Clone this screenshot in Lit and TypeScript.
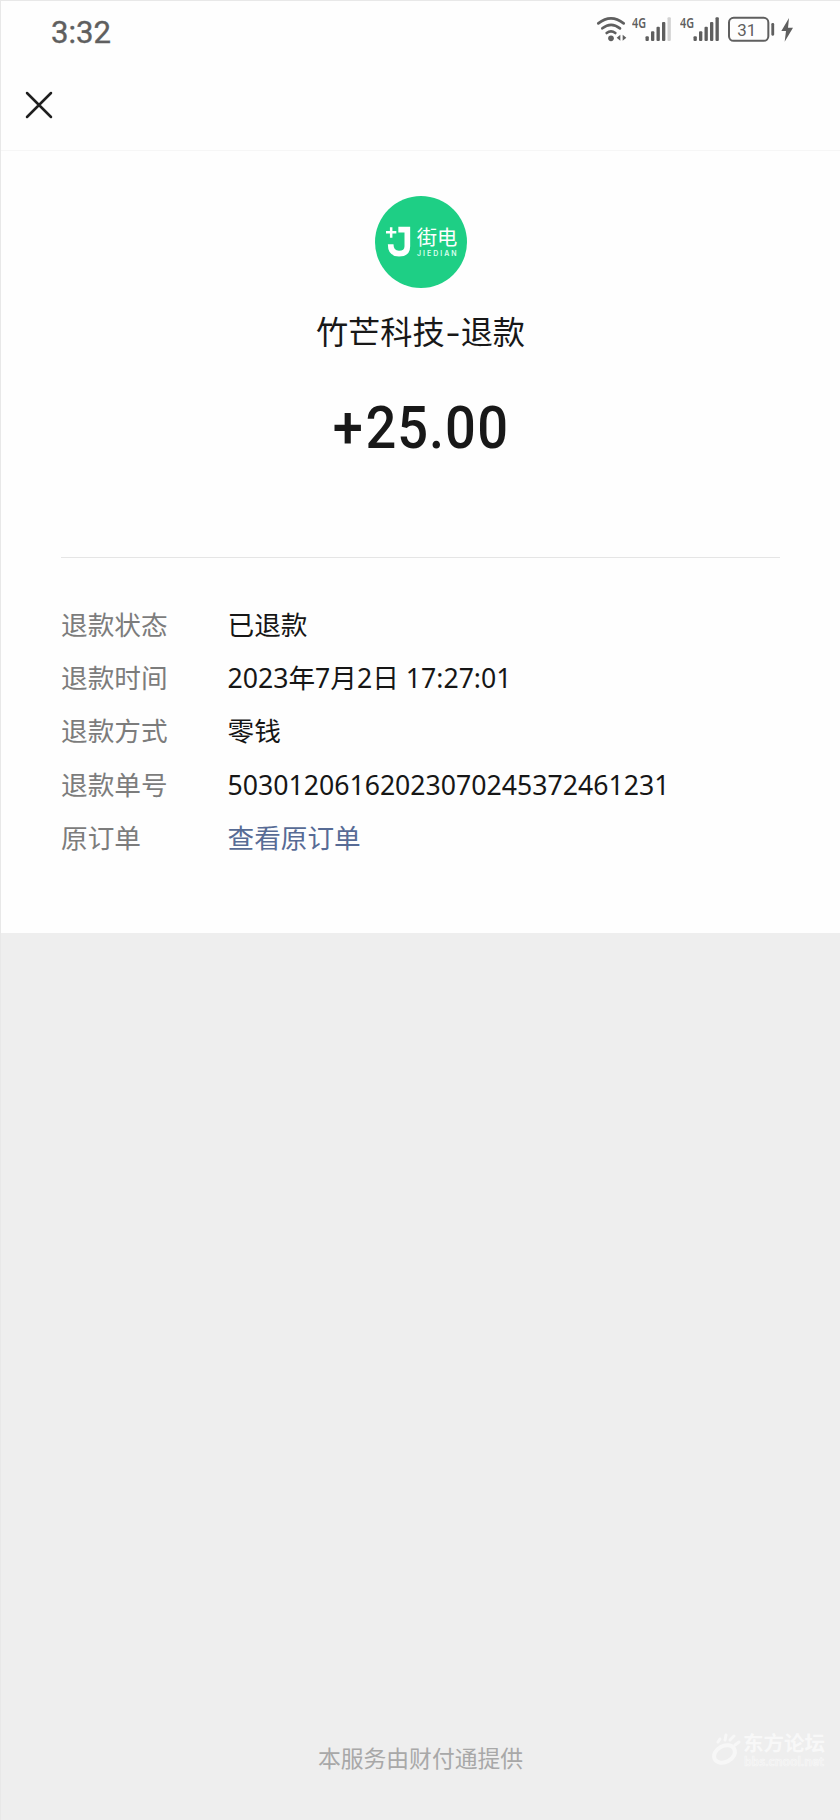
import { LitElement, html, svg, css } from "lit";
import { customElement, property } from "lit/decorators.js";

@customElement("status-bar")
class StatusBar extends LitElement {
  static styles = css`
    :host { display: flex; height: 61px; box-sizing: border-box; padding: 14px 0 0 50px; font-family: "Noto Sans", sans-serif; }
    svg { display: block; }
    .time { width: 64px; height: 40px; margin-top: -2px; flex: none; }
    .time text { font: 400 32px Roboto, sans-serif; fill: #5f5f5f; stroke: #5f5f5f; stroke-width: 0.4; }
    .icons { display: flex; margin-left: 481px; height: 28px; }
    .wifi { width: 32px; height: 28px; margin-right: 4px; }
    .signal { width: 41px; height: 28px; margin-right: 7px; }
    .battery { width: 48px; height: 28px; margin-right: 5px; }
    .bolt { width: 13px; height: 28px; }
    .net { font: 600 42px "Noto Sans", sans-serif; fill: #5f5f5f; }
    .level { font: 400 51px Roboto, sans-serif; fill: #5f5f5f; }
  `;

  signal(full: boolean) {
    return html`<svg class="signal" viewBox="0 0 123 84">
      <text class="net" x="0" y="38" textLength="42" lengthAdjust="spacingAndGlyphs">4G</text>
      ${[0, 1, 2, 3, 4].map((i) => {
        const top = [64, 49, 35, 21, 7][i];
        return svg`<rect x=${40.5 + i * 16.5} y=${top} width="10" height=${78 - top} rx="3" fill=${i === 4 && !full ? "#d2d2d2" : "#5f5f5f"}></rect>`;
      })}
    </svg>`;
  }

  render() {
    return html`
      <svg class="time" viewBox="0 0 64 40"><text x="0" y="29.500" textLength="60" lengthAdjust="spacingAndGlyphs">3:32</text></svg>
      <div class="icons">
        <svg class="wifi" viewBox="0 0 96 84">
          <g fill="none" stroke="#5f5f5f" stroke-width="8" stroke-linecap="round">
            <path d="M7 25Q45-5 83 25"></path>
            <path d="M19 40Q45 19 72 40"></path>
            <path d="M32 54Q45 44 58 54"></path>
          </g>
          <circle cx="45" cy="70" r="8.500" fill="#5f5f5f"></circle>
          <path d="M73 59V77L62 68ZM80 59V77L91 68Z" fill="#5f5f5f"></path>
        </svg>
        ${this.signal(false)}${this.signal(true)}
        <svg class="battery" viewBox="0 0 144 84">
          <rect x="3" y="8.500" width="118" height="69" rx="14" fill="none" stroke="#5f5f5f" stroke-width="6"></rect>
          <text class="level" x="28" y="62" textLength="57" lengthAdjust="spacingAndGlyphs">31</text>
          <rect x="130" y="24" width="8.500" height="38" rx="3.500" fill="#5f5f5f"></rect>
        </svg>
        <svg class="bolt" viewBox="0 0 39 84"><path d="M24 9L1 48H15L11 80L36 38H21Z" fill="#5f5f5f"></path></svg>
      </div>`;
  }
}

@customElement("brand-logo")
class BrandLogo extends LitElement {
  static styles = css`
    :host { display: block; width: 94px; height: 94px; }
    svg { display: block; width: 94px; height: 94px; }
    .cn { font: 400 60px "Noto Sans CJK SC", sans-serif; fill: #fff; }
    .en { font: 600 21px Inter, sans-serif; fill: #d9ffef; }
  `;
  render() {
    return html`<svg viewBox="40 30 282 282">
      <circle cx="181" cy="171" r="138" fill="#1ecf85"></circle>
      <path d="M76 142H107M91.500 127V158" stroke="#fff" stroke-width="7.500" fill="none"></path>
      <path d="M113 134H140V184Q140 206 115 206Q90 206 90 178" stroke="#fff" stroke-width="17" fill="none"></path>
      <text class="cn" x="168" y="181" textLength="122" lengthAdjust="spacingAndGlyphs">街电</text>
      <text class="en" x="169" y="214" textLength="119">JIEDIAN</text>
    </svg>`;
  }
}

@customElement("forum-mark")
class ForumMark extends LitElement {
  static styles = css`
    :host { display: block; width: 120px; height: 48px; }
    svg { display: block; width: 120px; height: 48px; }
    .name { font: 700 20px "Noto Sans CJK SC", sans-serif; fill: #f8f8f8; }
    .site { font: 600 12px "Noto Sans", sans-serif; fill: none; stroke: #f7f7f7; stroke-width: 0.7; }
  `;
  render() {
    return html`<svg viewBox="0 0 120 48">
      <ellipse cx="17.500" cy="27" rx="11" ry="8" transform="rotate(-28 17.500 27)" fill="none" stroke="#f7f7f7" stroke-width="4"></ellipse>
      <path d="M11 15L13 12M18 13L19 8M23 13L27 9M28 18L32 15" stroke="#f7f7f7" stroke-width="3" stroke-linecap="round"></path>
      <text class="name" x="36" y="24" textLength="82" lengthAdjust="spacingAndGlyphs">东方论坛</text>
      <text class="site" x="37" y="38.500" textLength="80" lengthAdjust="spacingAndGlyphs">bbs.cnool.net</text>
    </svg>`;
  }
}

@customElement("detail-row")
class DetailRow extends LitElement {
  static styles = css`
    :host { display: flex; height: 53.300px; align-items: center; font: 400 26.650px/38px "Noto Sans", "Noto Sans CJK SC", sans-serif; white-space: nowrap; }
    .label { width: 166.500px; flex: none; color: #7c7c7c; }
    .value { color: #161616; }
    .link { color: #576b95; }
  `;
  @property() label = "";
  @property() value = "";
  @property({ type: Boolean }) link = false;
  render() {
    return html`<span class="label">${this.label}</span><span class=${this.link ? "link" : "value"}>${this.value}</span>`;
  }
}

const DETAILS = [
  { label: "退款状态", value: "已退款" },
  { label: "退款时间", value: "2023年7月2日 17:27:01" },
  { label: "退款方式", value: "零钱" },
  { label: "退款单号", value: "50301206162023070245372461231" },
  { label: "原订单", value: "查看原订单", link: true },
];

@customElement("app-root")
class AppRoot extends LitElement {
  static styles = css`
    :host { display: flex; flex-direction: column; box-sizing: border-box; width: 840px; height: 1820px; background: #eee; border-top: 1px solid #e8e8e8; border-left: 1px solid #e8e8e8; font-family: "Noto Sans", "Noto Sans CJK SC", sans-serif; }
    .sheet { background: #fefefe; height: 932px; flex: none; display: flex; flex-direction: column; }
    .nav { height: 89px; box-sizing: border-box; border-bottom: 1px solid #f6f6f6; padding: 29px 0 0 23.500px; flex: none; }
    .close { display: block; width: 28px; height: 28px; }
    .summary { display: flex; flex-direction: column; align-items: center; padding-top: 44px; height: 407px; box-sizing: border-box; margin: 0 60px 0 60px; border-bottom: 1px solid #e5e5e5; flex: none; }
    .title { font-size: 32.200px; line-height: 46px; margin-top: 20px; color: #181818; white-space: nowrap; }
    .dash { display: inline-block; width: 16px; text-align: center; transform: scaleX(1.4); }
    .amount { display: block; width: 180px; height: 80px; margin-top: 32px; }
    .amount text { font: 500 59px Roboto, sans-serif; fill: #181818; }
    .details { padding: 40px 0 0 60px; }
    .footer { flex: 1; display: grid; grid-template-columns: 1fr auto 1fr; align-items: end; }
    .provider { grid-column: 2; font-size: 22.800px; line-height: 34px; color: #a8a8a8; margin-bottom: 44px; }
    .mark { justify-self: end; margin: 0 13px 45px 0; }
  `;
  render() {
    return html`
      <div class="sheet">
        <status-bar></status-bar>
        <div class="nav">
          <svg class="close" viewBox="0 0 28 28"><path d="M2 2L26 26M26 2L2 26" stroke="#1f1f1f" stroke-width="2.500" stroke-linecap="round"></path></svg>
        </div>
        <div class="summary">
          <brand-logo></brand-logo>
          <div class="title">竹芒科技<span class="dash">-</span>退款</div>
          <svg class="amount" viewBox="0 0 180 80"><text transform="scale(0.92 1)" x="2 37.500 72 106.500 124 159" y="61.500">+25.00</text></svg>
        </div>
        <div class="details">
          ${DETAILS.map((d) => html`<detail-row .label=${d.label} .value=${d.value} .link=${!!d.link}></detail-row>`)}
        </div>
      </div>
      <div class="footer">
        <div class="provider">本服务由财付通提供</div>
        <forum-mark class="mark"></forum-mark>
      </div>`;
  }
}
